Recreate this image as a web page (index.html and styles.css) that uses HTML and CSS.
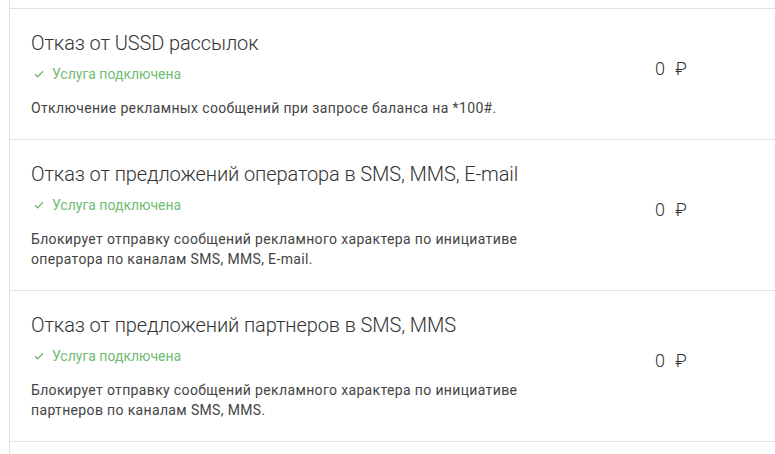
FILE: index.html
```html
<!DOCTYPE html>
<html>
<head>
	<title>Услуги</title>
	<link rel="stylesheet" href="styles.css">
</head>
<body>
	<div class="services">
		<div class="service">
			<div class="info">
				<div class="title">Отказ от USSD рассылок</div>
				<div class="status">
					<svg class="check" width="10" height="8" viewBox="0 0 10 8"><polyline points="1,4.2 3.6,6.8 9,1.2"/></svg>
					Услуга подключена
				</div>
				<div class="desc">Отключение рекламных сообщений при запросе баланса на *100#.</div>
			</div>
			<div class="price">0 ₽</div>
		</div>
		<div class="service">
			<div class="info">
				<div class="title">Отказ от предложений оператора в SMS, MMS, E-mail</div>
				<div class="status">
					<svg class="check" width="10" height="8" viewBox="0 0 10 8"><polyline points="1,4.2 3.6,6.8 9,1.2"/></svg>
					Услуга подключена
				</div>
				<div class="desc">Блокирует отправку сообщений рекламного характера по инициативе оператора по каналам SMS, MMS, E-mail.</div>
			</div>
			<div class="price">0 ₽</div>
		</div>
		<div class="service">
			<div class="info">
				<div class="title">Отказ от предложений партнеров в SMS, MMS</div>
				<div class="status">
					<svg class="check" width="10" height="8" viewBox="0 0 10 8"><polyline points="1,4.2 3.6,6.8 9,1.2"/></svg>
					Услуга подключена
				</div>
				<div class="desc">Блокирует отправку сообщений рекламного характера по инициативе партнеров по каналам SMS, MMS.</div>
			</div>
			<div class="price">0 ₽</div>
		</div>
	</div>
</body>
</html>
```

FILE: styles.css
```css
body {
	font-family: Roboto, "Liberation Sans", sans-serif;
	color: #333;
	background: #fff;
	margin: 0;
	padding: 0;
	overflow: hidden;
}
.services {
	margin-left: 9px;
	padding: 8px 0 20px;
	border-left: 1px solid #e2e2e2;
}
.service {
	display: flex;
	align-items: center;
	border-top: 1px solid #e2e2e2;
}
.service:last-child {
	border-bottom: 1px solid #e2e2e2;
}
.info {
	box-sizing: border-box;
	flex: 0 0 645px;
	padding: 22px 0 21px 21px;
}
.title {
	font-size: 20px;
	font-weight: 300;
	line-height: 24px;
	letter-spacing: -0.1px;
	color: #333;
}
.status {
	display: flex;
	align-items: center;
	margin-top: 9px;
	font-size: 14px;
	line-height: 20px;
	color: #72bb72;
}
.check {
	margin: 0 8px 0 3px;
	fill: none;
	stroke: #72bb72;
	stroke-width: 1.3;
}
.desc {
	max-width: 530px;
	margin-top: 14px;
	font-size: 14px;
	line-height: 20px;
	letter-spacing: 0.35px;
	color: #444;
}
.price {
	margin-bottom: 12px;
	font-size: 18px;
	font-weight: 300;
	word-spacing: 6px;
	color: #333;
}
```
